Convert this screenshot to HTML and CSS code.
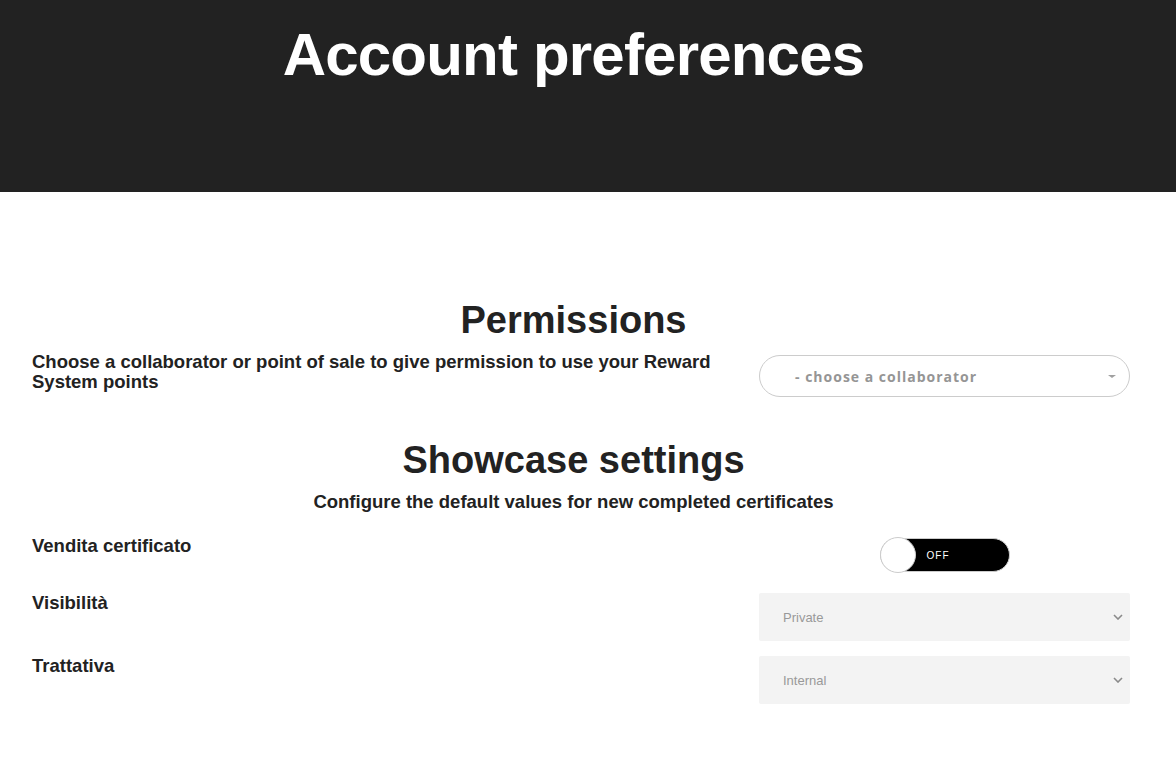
FILE: index.html
```html
<!DOCTYPE html>
<html lang="en">
<head>
    <meta charset="UTF-8">
    <meta name="viewport" content="width=device-width, initial-scale=1.0">
    <title>Account preferences</title>
    <link rel="stylesheet" href="styles.css">
</head>
<body>
    <header class="hero">
        <div class="wrap">
            <h1>Account preferences</h1>
        </div>
    </header>

    <main class="wrap content">
        <section class="block">
            <h2>Permissions</h2>
            <div class="row">
                <div class="col-label">Choose a collaborator or point of sale to give permission to use your Reward System points</div>
                <div class="col-field">
                    <div class="pill-select">
                        <span>- choose a collaborator</span>
                        <span class="caret"></span>
                    </div>
                </div>
            </div>
        </section>

        <section class="block showcase">
            <h2>Showcase settings</h2>
            <p class="subtitle">Configure the default values for new completed certificates</p>

            <div class="row setting first">
                <div class="col-label">Vendita certificato</div>
                <div class="col-field center">
                    <div class="toggle">
                        <span class="knob"></span>
                        <span class="toggle-text">OFF</span>
                    </div>
                </div>
            </div>

            <div class="row setting">
                <div class="col-label">Visibilità</div>
                <div class="col-field">
                    <div class="select-box">
                        <span>Private</span>
                        <svg class="chevron" width="10" height="6" viewBox="0 0 10 6"><path d="M1 1 L5 5 L9 1" fill="none" stroke="#8a8a8a" stroke-width="1.6"/></svg>
                    </div>
                </div>
            </div>

            <div class="row setting">
                <div class="col-label">Trattativa</div>
                <div class="col-field">
                    <div class="select-box">
                        <span>Internal</span>
                        <svg class="chevron" width="10" height="6" viewBox="0 0 10 6"><path d="M1 1 L5 5 L9 1" fill="none" stroke="#8a8a8a" stroke-width="1.6"/></svg>
                    </div>
                </div>
            </div>
        </section>
    </main>
</body>
</html>
```

FILE: styles.css
```css
body {
    margin: 0;
    font-family: 'Liberation Sans', Arial, sans-serif;
    color: #222222;
    background-color: #FFFFFF;
}

.wrap {
    width: 1113px;
    margin-left: 17px;
}

.hero {
    height: 192px;
    background-color: #222222; /* dark banner */
}

.hero h1 {
    margin: 0;
    padding-top: 21px;
    text-align: center;
    color: #FFFFFF;
    font-size: 60px;
    font-weight: bold;
    line-height: 67px;
    letter-spacing: -0.8px;
}

.content {
    padding-top: 106px;
}

.block h2 {
    margin: 0;
    text-align: center;
    font-size: 38px;
    line-height: 44px;
}

.row {
    display: flex;
    align-items: flex-start;
    margin-top: 10px;
}

.col-label {
    width: 742px;
    box-sizing: border-box;
    padding: 0 15px;
    font-size: 18.5px;
    font-weight: bold;
    line-height: 20px;
}

.col-field {
    width: 371px;
}

.col-field.center {
    display: flex;
    justify-content: center;
}

.pill-select {
    display: flex;
    align-items: center;
    justify-content: space-between;
    height: 42px;
    margin-top: 3px;
    box-sizing: border-box;
    padding: 0 13px 0 35px;
    border: 1px solid #CCCCCC;
    border-radius: 21px;
    font-family: 'Open Sans', sans-serif;
    font-size: 14px;
    font-weight: bold;
    letter-spacing: 1px;
    color: #959595;
}

.caret {
    width: 0;
    height: 0;
    border-left: 4px solid transparent;
    border-right: 4px solid transparent;
    border-top: 3px solid #A0A0A0;
}

.showcase {
    margin-top: 41px;
}

.subtitle {
    margin: 10px 0 0;
    text-align: center;
    font-size: 18.5px;
    font-weight: bold;
    line-height: 20px;
}

.setting {
    margin-top: 15px;
}

.setting.first {
    margin-top: 24px;
    margin-bottom: 21px;
}

.toggle {
    display: flex;
    align-items: center;
    width: 130px;
    height: 34px;
    margin-top: 2px;
    box-sizing: border-box;
    border: 1px solid #CCCCCC;
    border-radius: 17px;
    background-color: #000000;
}

.knob {
    width: 36px;
    height: 36px;
    margin-left: -1px;
    box-sizing: border-box;
    border: 1px solid #CCCCCC;
    border-radius: 50%;
    background-color: #FFFFFF;
}

.toggle-text {
    margin-left: 11px;
    color: #FFFFFF;
    font-size: 10px;
    letter-spacing: 1px;
}

.select-box {
    display: flex;
    align-items: center;
    justify-content: space-between;
    height: 48px;
    box-sizing: border-box;
    padding: 0 7px 0 24px;
    border-radius: 2px;
    background-color: #F3F3F3;
    font-size: 13px;
    color: #999999;
}
```
